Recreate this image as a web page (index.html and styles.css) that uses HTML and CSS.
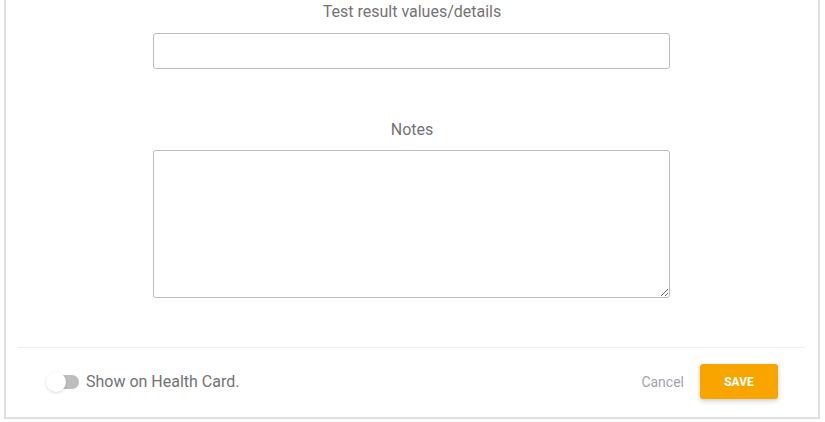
FILE: index.html
```html
<!DOCTYPE html>
<html>
<head>
<meta charset="utf-8">
<link rel="stylesheet" href="styles.css">
</head>
<body>
<div class="page">
  <div class="card">
    <div class="fields">
      <label class="label">Test result values/details</label>
      <input class="input" type="text">
      <label class="label notes-label">Notes</label>
      <textarea class="textarea"></textarea>
    </div>
    <div class="divider"></div>
    <div class="footer">
      <div class="toggle-wrap">
        <span class="toggle"><span class="track"></span><span class="knob"></span></span>
        <span class="toggle-text">Show on Health Card.</span>
      </div>
      <div class="actions">
        <button class="cancel">Cancel</button>
        <button class="save">SAVE</button>
      </div>
    </div>
  </div>
</div>
</body>
</html>
```
FILE: styles.css
```css
* { box-sizing: border-box; }
html, body { margin: 0; padding: 0; background: #fff; }
body { font-family: Roboto, "Liberation Sans", sans-serif; }
.page { padding: 0 5px 0 4px; }
.card {
  width: 816px;
  border: 2px solid #e0e0e0;
  border-top: none;
  background: #fff;
}
.fields {
  display: flex;
  flex-direction: column;
  align-items: center;
}
.label {
  display: block;
  font-size: 16px;
  line-height: 24px;
  color: #737373;
  height: 24px;
}
.input {
  display: block;
  width: 517px;
  height: 36px;
  margin: 9px 1px 0 0;
  border: 1px solid #bdbdbd;
  border-radius: 3px;
  outline: none;
  padding: 0 8px;
  font: inherit;
}
.notes-label { margin-top: 49px; }
.textarea {
  display: block;
  width: 517px;
  height: 148px;
  margin: 8px 1px 0 0;
  border: 1px solid #bdbdbd;
  border-radius: 3px;
  outline: none;
  resize: vertical;
  font: inherit;
}
.divider {
  height: 1px;
  background: #eeeeee;
  margin: 49px 13px 0 12px;
}
.footer {
  display: flex;
  justify-content: space-between;
  align-items: center;
  padding: 15px 40px 17px 40px;
  height: 69px;
}
.toggle-wrap { display: flex; align-items: center; }
.toggle {
  position: relative;
  width: 34px;
  height: 20px;
  display: inline-block;
}
.track {
  position: absolute;
  left: 2px;
  top: 3px;
  width: 31px;
  height: 14px;
  border-radius: 7px;
  background: #bdbdbd;
}
.knob {
  position: absolute;
  left: 0;
  top: 0;
  width: 20px;
  height: 20px;
  border-radius: 50%;
  background: #fff;
  box-shadow: 0 1px 3px rgba(0,0,0,0.15);
}
.toggle-text {
  margin-left: 6px;
  font-size: 16px;
  color: #737373;
}
.actions { display: flex; align-items: center; }
.cancel {
  background: none;
  border: none;
  padding: 0;
  font-family: inherit;
  font-size: 14px;
  color: #a3a3ad;
  margin-right: 16px;
  cursor: pointer;
}
.save {
  width: 78px;
  height: 35px;
  border: none;
  border-radius: 3px;
  background: #f9a500;
  color: #fff;
  font-family: inherit;
  font-weight: 700;
  font-size: 12px;
  box-shadow: 0 2px 5px rgba(0,0,0,0.2);
  cursor: pointer;
}
```
